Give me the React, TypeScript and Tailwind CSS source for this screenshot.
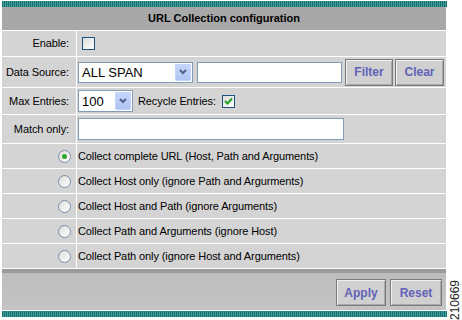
import React from 'react';

const rowBg = 'bg-[#d4d4d4]';

function XpCheck({ checked = false }: { checked?: boolean }) {
  return (
    <div className="w-[13px] h-[13px] border border-[#1c5180] bg-[linear-gradient(135deg,#dcdcd7,#ffffff)] flex items-center justify-center">
      {checked && (
        <svg width="9" height="9" viewBox="0 0 9 9">
          <path d="M1 4 L3.5 6.5 L8 1.5" stroke="#21a121" strokeWidth="2" fill="none" />
        </svg>
      )}
    </div>
  );
}

function XpRadio({ checked = false }: { checked?: boolean }) {
  return (
    <div className="w-[13px] h-[13px] rounded-full border border-[#7a8ea8] bg-[linear-gradient(135deg,#dcdcd7,#ffffff)] flex items-center justify-center">
      {checked && <div className="w-[5px] h-[5px] rounded-full bg-[#2fa52f]" />}
    </div>
  );
}

function XpSelect({ value, width, height }: { value: string; width: string; height: string }) {
  return (
    <div className={`${width} ${height} border border-[#7f9db9] bg-white flex items-stretch`}>
      <div className="flex-1 pl-[3px] flex items-center text-[13px] leading-none tracking-normal">{value}</div>
      <div className="w-[16px] my-px mr-px rounded-[1px] border border-[#c3d3fd] bg-[linear-gradient(180deg,#c6d6fc,#b0c4f2)] flex items-center justify-center">
        <svg width="8" height="6" viewBox="0 0 8 6">
          <path d="M1 1 L4 4 L7 1" stroke="#4d6185" strokeWidth="2" fill="none" />
        </svg>
      </div>
    </div>
  );
}

function Btn({ label, width }: { label: string; width: string }) {
  return (
    <div className={`${width} h-[27px] border border-[#7a7a7a] bg-[#d0d0d0] shadow-[inset_1px_1px_0_#f0f0f0,inset_-1px_-1px_0_#a8a8a8] flex items-center justify-center text-[12px] font-bold tracking-normal text-[#6262b8]`}>
      {label}
    </div>
  );
}

function Row({ label, h, children }: { label?: React.ReactNode; h: string; children: React.ReactNode }) {
  return (
    <div className={`grid grid-cols-[74px_1fr] gap-x-px ${h}`}>
      <div className={`${rowBg} flex items-center justify-end pr-[7px]`}>{label}</div>
      <div className={`${rowBg} flex items-center pl-px`}>{children}</div>
    </div>
  );
}

const options = [
  'Collect complete URL (Host, Path and Arguments)',
  'Collect Host only (ignore Path and Argurments)',
  'Collect Host and Path (ignore Arguments)',
  'Collect Path and Arguments (ignore Host)',
  'Collect Path only (ignore Host and Arguments)',
];

const teal = 'h-[6px] bg-[repeating-linear-gradient(90deg,#17706d_0_1px,#3e9e9a_1px_2px)]';

export default function App() {
  return (
    <div className="relative w-[462px] h-[320px] bg-white text-black text-[11px] tracking-[-0.1px] font-['Liberation_Sans',Arial,sans-serif]">
      <div className="ml-[2px] pt-px w-[445px] flex flex-col">
        <div className={teal} />
        <div className="flex flex-col gap-px bg-white w-[444px]">
          <div className="h-[23px] bg-[#a8a8a8] flex items-center justify-center font-bold tracking-normal">
            URL Collection configuration
          </div>
          <Row label="Enable:" h="h-[25px]">
            <div className="ml-[4px]"><XpCheck /></div>
          </Row>
          <Row label="Data Source:" h="h-[30px]">
            <XpSelect value="ALL SPAN" width="w-[115px]" height="h-[21px]" />
            <div className="ml-[4px] w-[145px] h-[21px] border border-[#7f9db9] bg-white" />
            <div className="ml-[3px]"><Btn label="Filter" width="w-[48px]" /></div>
            <div className="ml-[2px]"><Btn label="Clear" width="w-[49px]" /></div>
          </Row>
          <Row label="Max Entries:" h="h-[26px]">
            <XpSelect value="100" width="w-[55px]" height="h-[22px]" />
            <span className="ml-[5px]">Recycle Entries:</span>
            <div className="ml-[6px]"><XpCheck checked /></div>
          </Row>
          <Row label="Match only:" h="h-[28px]">
            <div className="w-[266px] h-[22px] border border-[#7f9db9] bg-white" />
          </Row>
          {options.map((o, i) => (
            <div key={o} className="grid grid-cols-[74px_1fr] gap-x-px h-[24px]">
              <div className={`${rowBg} flex items-center justify-end pr-[5px]`}>
                <XpRadio checked={i === 0} />
              </div>
              <div className={`${rowBg} flex items-center pl-px`}>{o}</div>
            </div>
          ))}
          <div className="h-[5px] bg-[#9a9a9a]" />
        </div>
        <div className="w-[444px] h-[37px] -mt-px bg-[linear-gradient(180deg,#bdbdbd,#c4c4c4)] flex justify-end items-start pt-[6px] pr-[4px] gap-[4px]">
          <Btn label="Apply" width="w-[50px]" />
          <Btn label="Reset" width="w-[52px]" />
        </div>
        <div className="h-px bg-white" />
        <div className={teal} />
      </div>
      <div className="absolute left-[448px] top-[280px] w-[13px] h-[40px] flex items-center justify-center text-[12px] tracking-normal text-[#222] [writing-mode:vertical-rl] rotate-180">
        210669
      </div>
    </div>
  );
}
